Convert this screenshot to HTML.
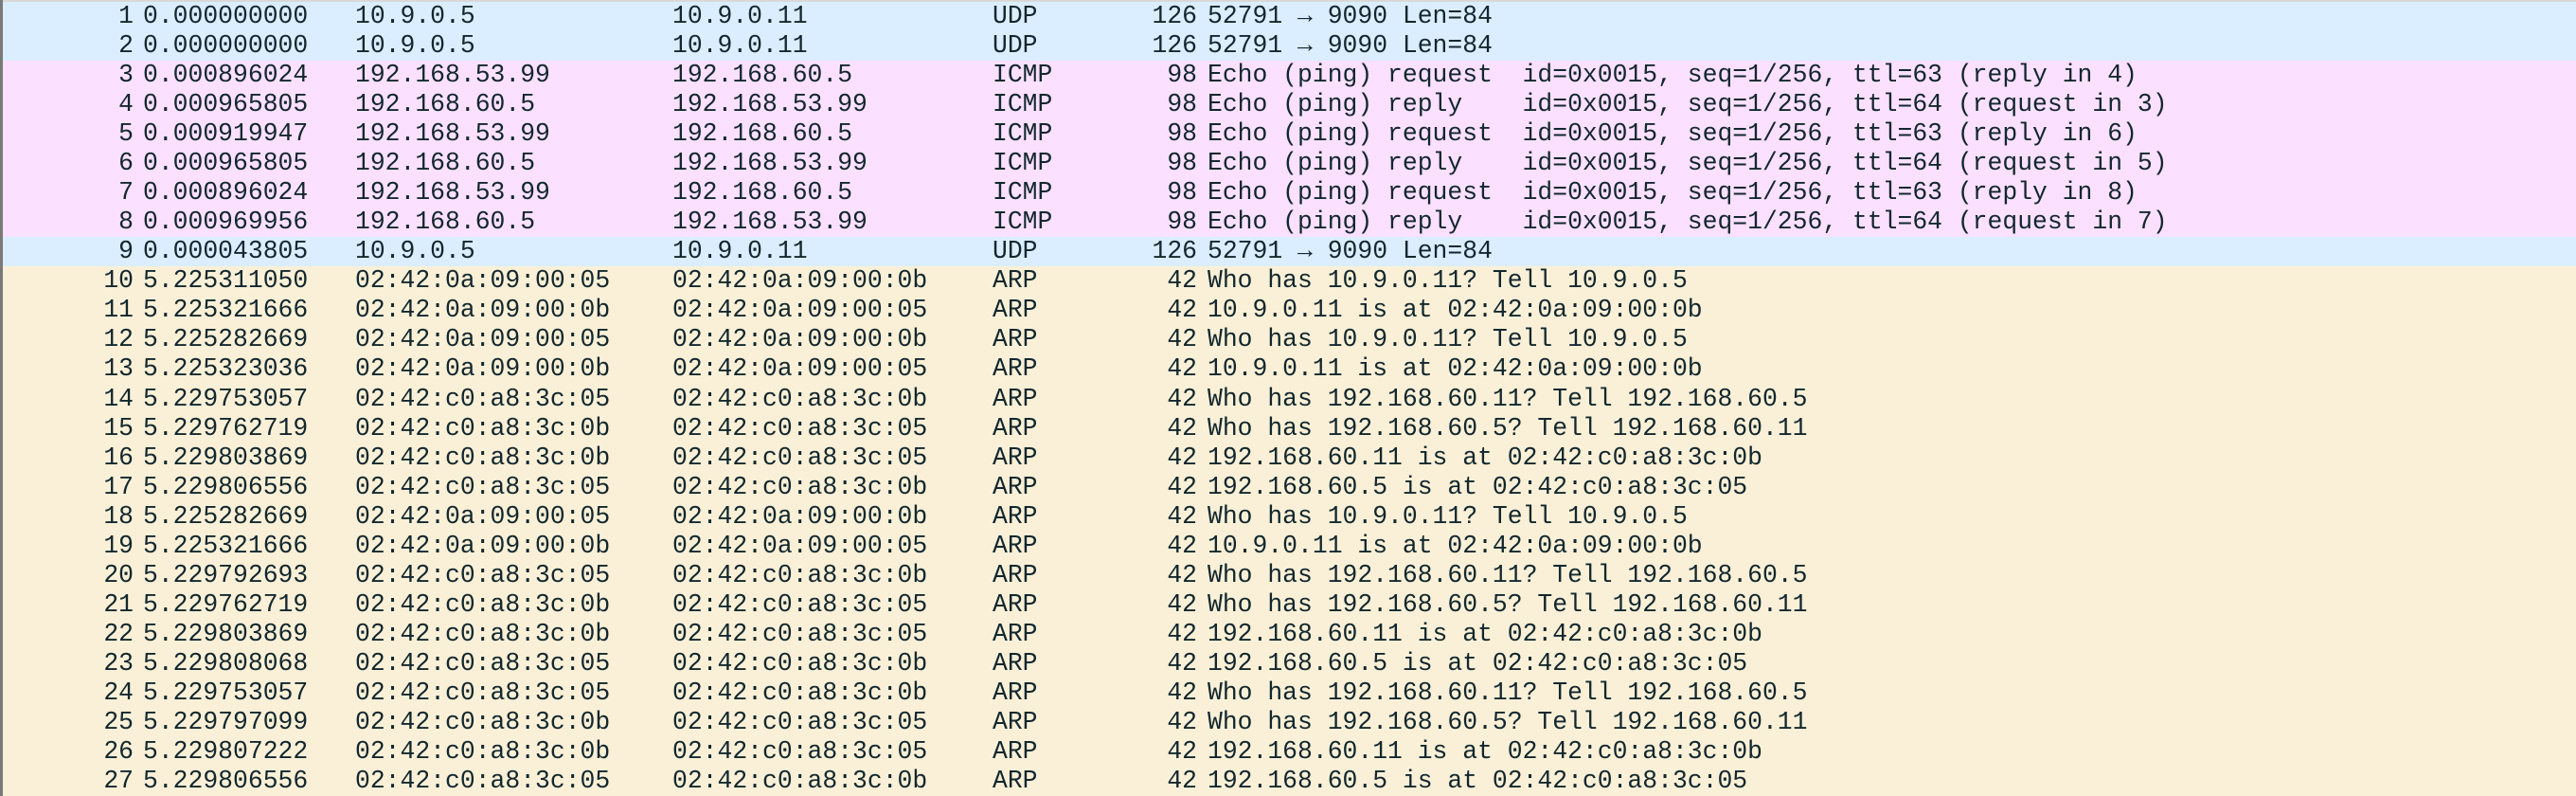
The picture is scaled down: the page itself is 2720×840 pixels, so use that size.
<!DOCTYPE html>
<html><head><meta charset="utf-8"><style>
html,body{margin:0;padding:0;width:2720px;height:840px;overflow:hidden;background:#faf0d7}
#top{position:absolute;left:0;top:0;width:2720px;height:3px;background:#d8d8d8}
#left{position:absolute;left:0;top:0;width:3px;height:840px;background:#7a7a7a;z-index:2}
.r{position:absolute;left:0;width:2720px;height:31.04px;font-family:"Liberation Mono",monospace;font-size:26.4px;line-height:31.04px;color:#12272e;white-space:pre}
.u{background:#daeeff}.i{background:#fce0ff}.a{background:#faf0d7}
.r span{position:absolute;top:0}
.n{right:2579px;text-align:right}
.t{left:151px}.s{left:375px}.d{left:710px}.p{left:1048px}
.l{right:1456px;text-align:right}.f{left:1275px}
</style></head><body>
<div id="top"></div><div id="left"></div>
<div id="rows"></div>
<div class="r u" style="top:2px"><span class="n">1</span><span class="t">0.000000000</span><span class="s">10.9.0.5</span><span class="d">10.9.0.11</span><span class="p">UDP</span><span class="l">126</span><span class="f">52791 → 9090 Len=84</span></div>
<div class="r u" style="top:33.04px"><span class="n">2</span><span class="t">0.000000000</span><span class="s">10.9.0.5</span><span class="d">10.9.0.11</span><span class="p">UDP</span><span class="l">126</span><span class="f">52791 → 9090 Len=84</span></div>
<div class="r i" style="top:64.08px"><span class="n">3</span><span class="t">0.000896024</span><span class="s">192.168.53.99</span><span class="d">192.168.60.5</span><span class="p">ICMP</span><span class="l">98</span><span class="f">Echo (ping) request  id=0x0015, seq=1/256, ttl=63 (reply in 4)</span></div>
<div class="r i" style="top:95.12px"><span class="n">4</span><span class="t">0.000965805</span><span class="s">192.168.60.5</span><span class="d">192.168.53.99</span><span class="p">ICMP</span><span class="l">98</span><span class="f">Echo (ping) reply    id=0x0015, seq=1/256, ttl=64 (request in 3)</span></div>
<div class="r i" style="top:126.16px"><span class="n">5</span><span class="t">0.000919947</span><span class="s">192.168.53.99</span><span class="d">192.168.60.5</span><span class="p">ICMP</span><span class="l">98</span><span class="f">Echo (ping) request  id=0x0015, seq=1/256, ttl=63 (reply in 6)</span></div>
<div class="r i" style="top:157.2px"><span class="n">6</span><span class="t">0.000965805</span><span class="s">192.168.60.5</span><span class="d">192.168.53.99</span><span class="p">ICMP</span><span class="l">98</span><span class="f">Echo (ping) reply    id=0x0015, seq=1/256, ttl=64 (request in 5)</span></div>
<div class="r i" style="top:188.24px"><span class="n">7</span><span class="t">0.000896024</span><span class="s">192.168.53.99</span><span class="d">192.168.60.5</span><span class="p">ICMP</span><span class="l">98</span><span class="f">Echo (ping) request  id=0x0015, seq=1/256, ttl=63 (reply in 8)</span></div>
<div class="r i" style="top:219.28px"><span class="n">8</span><span class="t">0.000969956</span><span class="s">192.168.60.5</span><span class="d">192.168.53.99</span><span class="p">ICMP</span><span class="l">98</span><span class="f">Echo (ping) reply    id=0x0015, seq=1/256, ttl=64 (request in 7)</span></div>
<div class="r u" style="top:250.32px"><span class="n">9</span><span class="t">0.000043805</span><span class="s">10.9.0.5</span><span class="d">10.9.0.11</span><span class="p">UDP</span><span class="l">126</span><span class="f">52791 → 9090 Len=84</span></div>
<div class="r a" style="top:281.36px"><span class="n">10</span><span class="t">5.225311050</span><span class="s">02:42:0a:09:00:05</span><span class="d">02:42:0a:09:00:0b</span><span class="p">ARP</span><span class="l">42</span><span class="f">Who has 10.9.0.11? Tell 10.9.0.5</span></div>
<div class="r a" style="top:312.4px"><span class="n">11</span><span class="t">5.225321666</span><span class="s">02:42:0a:09:00:0b</span><span class="d">02:42:0a:09:00:05</span><span class="p">ARP</span><span class="l">42</span><span class="f">10.9.0.11 is at 02:42:0a:09:00:0b</span></div>
<div class="r a" style="top:343.44px"><span class="n">12</span><span class="t">5.225282669</span><span class="s">02:42:0a:09:00:05</span><span class="d">02:42:0a:09:00:0b</span><span class="p">ARP</span><span class="l">42</span><span class="f">Who has 10.9.0.11? Tell 10.9.0.5</span></div>
<div class="r a" style="top:374.48px"><span class="n">13</span><span class="t">5.225323036</span><span class="s">02:42:0a:09:00:0b</span><span class="d">02:42:0a:09:00:05</span><span class="p">ARP</span><span class="l">42</span><span class="f">10.9.0.11 is at 02:42:0a:09:00:0b</span></div>
<div class="r a" style="top:405.52px"><span class="n">14</span><span class="t">5.229753057</span><span class="s">02:42:c0:a8:3c:05</span><span class="d">02:42:c0:a8:3c:0b</span><span class="p">ARP</span><span class="l">42</span><span class="f">Who has 192.168.60.11? Tell 192.168.60.5</span></div>
<div class="r a" style="top:436.56px"><span class="n">15</span><span class="t">5.229762719</span><span class="s">02:42:c0:a8:3c:0b</span><span class="d">02:42:c0:a8:3c:05</span><span class="p">ARP</span><span class="l">42</span><span class="f">Who has 192.168.60.5? Tell 192.168.60.11</span></div>
<div class="r a" style="top:467.6px"><span class="n">16</span><span class="t">5.229803869</span><span class="s">02:42:c0:a8:3c:0b</span><span class="d">02:42:c0:a8:3c:05</span><span class="p">ARP</span><span class="l">42</span><span class="f">192.168.60.11 is at 02:42:c0:a8:3c:0b</span></div>
<div class="r a" style="top:498.64px"><span class="n">17</span><span class="t">5.229806556</span><span class="s">02:42:c0:a8:3c:05</span><span class="d">02:42:c0:a8:3c:0b</span><span class="p">ARP</span><span class="l">42</span><span class="f">192.168.60.5 is at 02:42:c0:a8:3c:05</span></div>
<div class="r a" style="top:529.68px"><span class="n">18</span><span class="t">5.225282669</span><span class="s">02:42:0a:09:00:05</span><span class="d">02:42:0a:09:00:0b</span><span class="p">ARP</span><span class="l">42</span><span class="f">Who has 10.9.0.11? Tell 10.9.0.5</span></div>
<div class="r a" style="top:560.72px"><span class="n">19</span><span class="t">5.225321666</span><span class="s">02:42:0a:09:00:0b</span><span class="d">02:42:0a:09:00:05</span><span class="p">ARP</span><span class="l">42</span><span class="f">10.9.0.11 is at 02:42:0a:09:00:0b</span></div>
<div class="r a" style="top:591.76px"><span class="n">20</span><span class="t">5.229792693</span><span class="s">02:42:c0:a8:3c:05</span><span class="d">02:42:c0:a8:3c:0b</span><span class="p">ARP</span><span class="l">42</span><span class="f">Who has 192.168.60.11? Tell 192.168.60.5</span></div>
<div class="r a" style="top:622.8px"><span class="n">21</span><span class="t">5.229762719</span><span class="s">02:42:c0:a8:3c:0b</span><span class="d">02:42:c0:a8:3c:05</span><span class="p">ARP</span><span class="l">42</span><span class="f">Who has 192.168.60.5? Tell 192.168.60.11</span></div>
<div class="r a" style="top:653.84px"><span class="n">22</span><span class="t">5.229803869</span><span class="s">02:42:c0:a8:3c:0b</span><span class="d">02:42:c0:a8:3c:05</span><span class="p">ARP</span><span class="l">42</span><span class="f">192.168.60.11 is at 02:42:c0:a8:3c:0b</span></div>
<div class="r a" style="top:684.88px"><span class="n">23</span><span class="t">5.229808068</span><span class="s">02:42:c0:a8:3c:05</span><span class="d">02:42:c0:a8:3c:0b</span><span class="p">ARP</span><span class="l">42</span><span class="f">192.168.60.5 is at 02:42:c0:a8:3c:05</span></div>
<div class="r a" style="top:715.92px"><span class="n">24</span><span class="t">5.229753057</span><span class="s">02:42:c0:a8:3c:05</span><span class="d">02:42:c0:a8:3c:0b</span><span class="p">ARP</span><span class="l">42</span><span class="f">Who has 192.168.60.11? Tell 192.168.60.5</span></div>
<div class="r a" style="top:746.96px"><span class="n">25</span><span class="t">5.229797099</span><span class="s">02:42:c0:a8:3c:0b</span><span class="d">02:42:c0:a8:3c:05</span><span class="p">ARP</span><span class="l">42</span><span class="f">Who has 192.168.60.5? Tell 192.168.60.11</span></div>
<div class="r a" style="top:778px"><span class="n">26</span><span class="t">5.229807222</span><span class="s">02:42:c0:a8:3c:0b</span><span class="d">02:42:c0:a8:3c:05</span><span class="p">ARP</span><span class="l">42</span><span class="f">192.168.60.11 is at 02:42:c0:a8:3c:0b</span></div>
<div class="r a" style="top:809.04px"><span class="n">27</span><span class="t">5.229806556</span><span class="s">02:42:c0:a8:3c:05</span><span class="d">02:42:c0:a8:3c:0b</span><span class="p">ARP</span><span class="l">42</span><span class="f">192.168.60.5 is at 02:42:c0:a8:3c:05</span></div>
</body></html>
